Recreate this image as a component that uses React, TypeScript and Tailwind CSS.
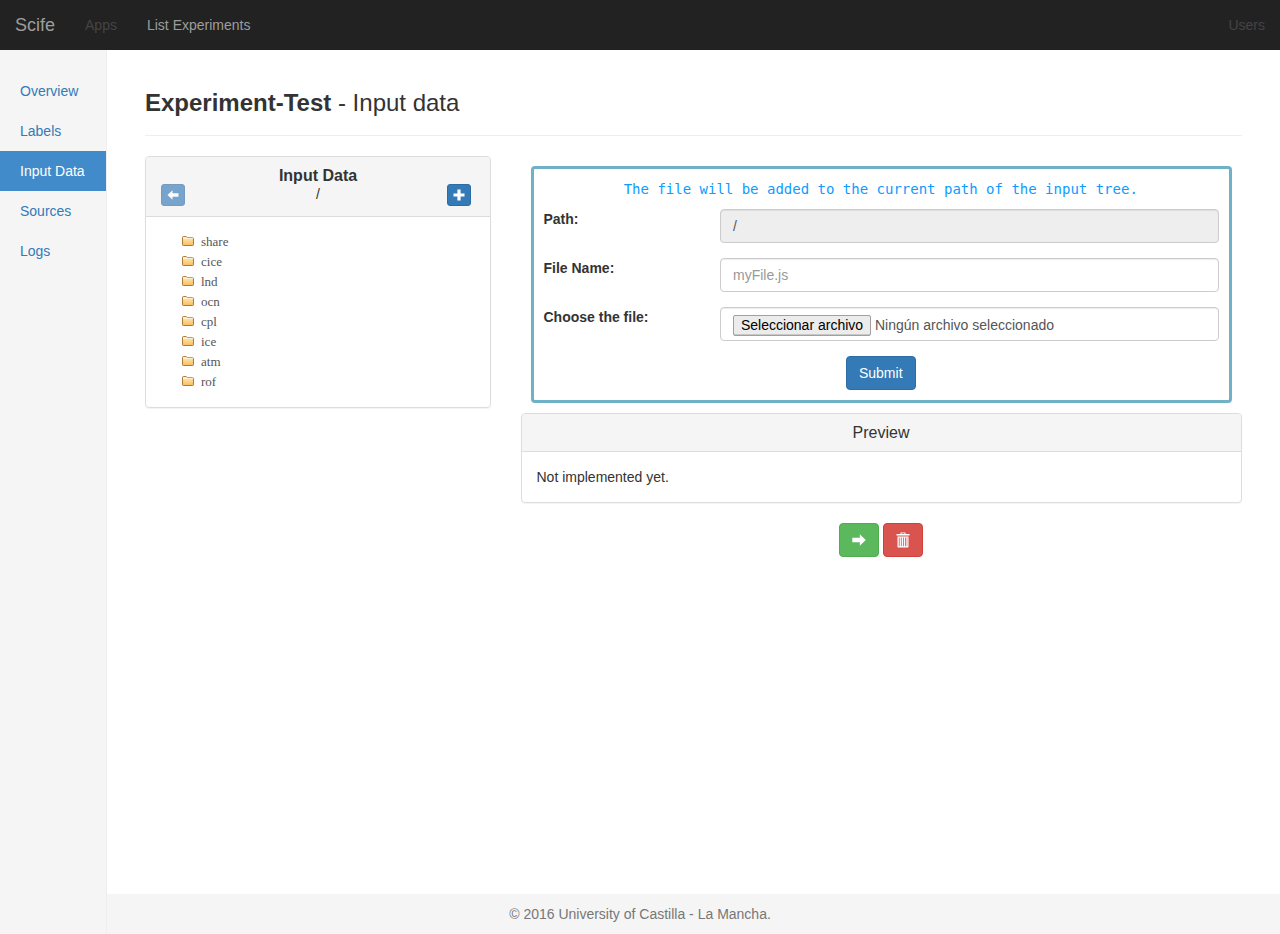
const folders = ["share", "cice", "lnd", "ocn", "cpl", "ice", "atm", "rof"];
const sideItems = ["Overview", "Labels", "Input Data", "Sources", "Logs"];

const FolderIcon = () => (
  <svg width="12" height="10" viewBox="0 0 13 11" className="mb-[2px] shrink-0">
    <defs>
      <linearGradient id="folderFill" x1="0" y1="0" x2="0" y2="1">
        <stop offset="0" stopColor="#ffedc4" />
        <stop offset="1" stopColor="#f9bd5c" />
      </linearGradient>
    </defs>
    <path
      d="M0.5 9.5V1.5C0.5 0.9 0.9 0.5 1.5 0.5H4.5L5.7 1.8H11.5C12.1 1.8 12.5 2.2 12.5 2.8V9.5C12.5 10.1 12.1 10.5 11.5 10.5H1.5C0.9 10.5 0.5 10.1 0.5 9.5Z"
      fill="url(#folderFill)"
      stroke="#a66c22"
      strokeWidth="1"
    />
    <path d="M1 2.5H12" stroke="#fff6e0" strokeWidth="1" />
  </svg>
);

const ArrowLeft = () => (
  <svg width="12" height="10" viewBox="0 0 12 10">
    <path d="M0.5 5L5.5 0.3V3.2H11.5V6.8H5.5V9.7Z" fill="#fff" />
  </svg>
);

const ArrowRight = () => (
  <svg width="14" height="12" viewBox="0 0 14 12">
    <path d="M13.8 6L7.8 0.2V3.8H0.3V8.2H7.8V11.8Z" fill="#fff" />
  </svg>
);

const PlusIcon = () => (
  <svg width="12" height="12" viewBox="0 0 12 12">
    <path d="M4.4 0.5H7.6V4.4H11.5V7.6H7.6V11.5H4.4V7.6H0.5V4.4H4.4Z" fill="#fff" />
  </svg>
);

const TrashIcon = () => (
  <svg width="14" height="16" viewBox="0 0 14 16">
    <path d="M4.5 2V0.5H9.5V2H13.5V3.5H0.5V2ZM5.5 2H8.5V1.3H5.5Z" fill="#fff" fillRule="evenodd" />
    <path
      d="M1.5 4.5H12.5V14.5C12.5 15.2 12.1 15.5 11.5 15.5H2.5C1.9 15.5 1.5 15.2 1.5 14.5ZM2.8 5.5V14.3H3.6V5.5ZM4.9 5.5V14.3H5.7V5.5ZM7 5.5V14.3H7.8V5.5ZM9.1 5.5V14.3H9.9V5.5ZM10.7 5.5V14.3H11.3V5.5Z"
      fill="#fff"
      fillRule="evenodd"
    />
  </svg>
);

const App = () => {
  return (
    <div className="flex h-[934px] flex-col overflow-hidden bg-white font-['Liberation_Sans',Arial,sans-serif] text-sm text-[#333]">
      <nav className="flex h-[50px] shrink-0 items-center bg-[#222] pl-[15px] pr-[15px] text-[#9d9d9d]">
        <span className="text-lg">Scife</span>
        <span className="ml-[30px] text-[#444]">Apps</span>
        <span className="ml-[30px]">List Experiments</span>
        <span className="ml-auto text-[#444]">Users</span>
      </nav>

      <div className="flex min-h-0 flex-1">
        <aside className="w-[107px] shrink-0 border-r border-[#eee] bg-[#f5f5f5] pt-[21px]">
          {sideItems.map((item) => (
            <div
              key={item}
              className={
                item === "Input Data"
                  ? "h-10 bg-[#428bca] px-5 py-[10px] leading-5 text-white"
                  : "h-10 px-5 py-[10px] leading-5 text-[#337ab7]"
              }
            >
              {item}
            </div>
          ))}
        </aside>

        <div className="flex min-w-0 flex-1 flex-col">
          <main className="flex-1 pl-[38px] pr-[38px] pt-[39px]">
            <h1 className="border-b border-[#eee] pb-[19px] text-2xl leading-[27px] text-[#333]">
              <b>Experiment-Test</b> - Input data
            </h1>

            <div className="mt-5 flex items-start gap-[30px]">
              <section className="w-[346px] shrink-0 rounded border border-[#ddd] shadow-[0_1px_1px_rgba(0,0,0,0.05)]">
                <header className="relative h-[60px] rounded-t border-b border-[#ddd] bg-[#f5f5f5] pt-[10px] text-center">
                  <div className="text-base font-bold leading-[18px]">Input Data</div>
                  <div className="leading-[18px]">/</div>
                  <button className="absolute left-[15px] top-[27px] flex h-[22px] w-6 items-center justify-center rounded-[3px] border border-[#2e6da4] bg-[#337ab7] opacity-65">
                    <ArrowLeft />
                  </button>
                  <button className="absolute right-[19px] top-[27px] flex h-[22px] w-6 items-center justify-center rounded-[3px] border border-[#2e6da4] bg-[#337ab7]">
                    <PlusIcon />
                  </button>
                </header>
                <ul className="pb-[15px] pl-9 pt-[15px] font-['Liberation_Serif',serif] text-[13px] text-[#555]">
                  {folders.map((name) => (
                    <li key={name} className="flex h-5 items-center gap-[7px]">
                      <FolderIcon />
                      <span>{name}</span>
                    </li>
                  ))}
                </ul>
              </section>

              <div className="min-w-0 flex-1">
                <form className="mx-[10px] mt-[10px] h-[237px] rounded border-[3px] border-[#6fb1c7] pl-[9.5px] pr-[10px] pt-3">
                  <p className="pr-px text-center font-['DejaVu_Sans_Mono',monospace] text-sm leading-[17px] text-[#0c9cff]">
                    The file will be added to the current path of the input tree.
                  </p>
                  <div className="mt-[11px] flex h-[49px]">
                    <label className="w-[176.5px] shrink-0 font-bold leading-5">Path:</label>
                    <div className="flex h-[34px] flex-1 items-center rounded border border-[#ccc] bg-[#eee] px-3 text-[#555] shadow-[inset_0_1px_1px_rgba(0,0,0,0.075)]">
                      /
                    </div>
                  </div>
                  <div className="flex h-[49px]">
                    <label className="w-[176.5px] shrink-0 font-bold leading-5">File Name:</label>
                    <div className="flex h-[34px] flex-1 items-center rounded border border-[#ccc] bg-white px-3 text-[#999] shadow-[inset_0_1px_1px_rgba(0,0,0,0.075)]">
                      myFile.js
                    </div>
                  </div>
                  <div className="flex h-[49px]">
                    <label className="w-[176.5px] shrink-0 font-bold leading-5">Choose the file:</label>
                    <div className="flex h-[34px] flex-1 items-center rounded border border-[#ccc] bg-white px-3 pt-[2px] text-[#555] shadow-[inset_0_1px_1px_rgba(0,0,0,0.075)]">
                      <span className="flex h-[21px] w-[138px] items-center justify-center rounded-[2px] border border-[#a0a0a0] bg-[#ececec] text-sm text-black shadow-[inset_0_-1px_0_#c8c8c8]">
                        Seleccionar archivo
                      </span>
                      <span className="ml-1 text-sm">Ningún archivo seleccionado</span>
                    </div>
                  </div>
                  <div className="pr-px text-center">
                    <button type="button" className="h-[34px] w-[70px] rounded border border-[#2e6da4] bg-[#337ab7] text-white">
                      Submit
                    </button>
                  </div>
                </form>

                <section className="mt-[10px] rounded border border-[#ddd] shadow-[0_1px_1px_rgba(0,0,0,0.05)]">
                  <header className="h-[38px] rounded-t border-b border-[#ddd] bg-[#f5f5f5] pr-px text-center text-base leading-[37px]">
                    Preview
                  </header>
                  <div className="py-[15px] pl-[14.5px] pr-[15px] leading-5">Not implemented yet.</div>
                </section>

                <div className="mt-5 flex justify-center gap-1 pr-[2px]">
                  <button className="flex h-[34px] w-10 items-center justify-center rounded border border-[#4cae4c] bg-[#5cb85c]">
                    <ArrowRight />
                  </button>
                  <button className="flex h-[34px] w-10 items-center justify-center rounded border border-[#d43f3a] bg-[#d9534f]">
                    <TrashIcon />
                  </button>
                </div>
              </div>
            </div>
          </main>

          <footer className="h-10 shrink-0 bg-[#f5f5f5] pr-[107px] text-center leading-10 text-[#777]">
            © 2016 University of Castilla - La Mancha.
          </footer>
        </div>
      </div>
    </div>
  );
};

export default App;
